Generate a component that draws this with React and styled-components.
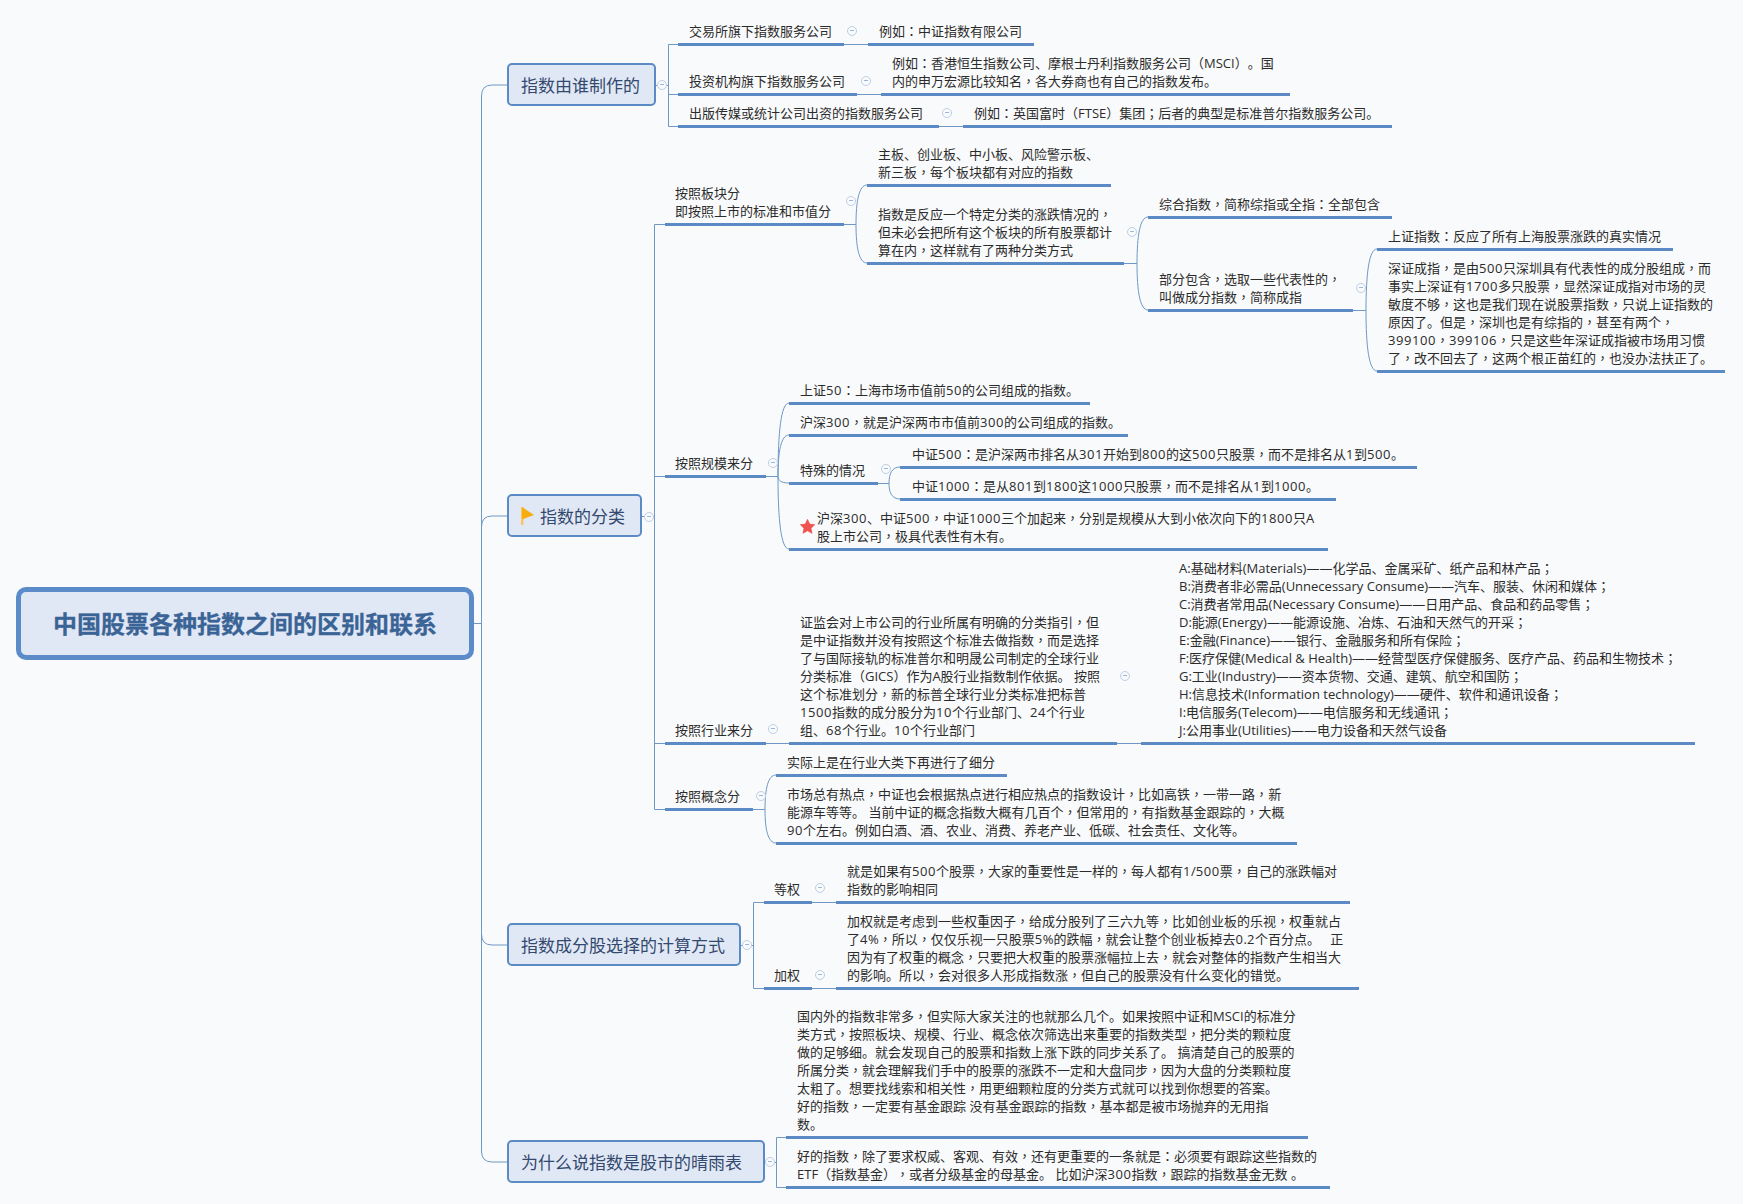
import styled, { createGlobalStyle } from 'styled-components';

const GlobalStyle = createGlobalStyle`
  html, body {
    margin: 0;
    padding: 0;
    background: #f9fafb;
  }
`;

const Canvas = styled.div`
  position: relative;
  width: 1743px;
  height: 1204px;
  overflow: hidden;
  background: #f9fafb;
  font-family: "Open Sans", "Noto Sans CJK SC", sans-serif;
  text-spacing-trim: space-all;
`;

const Links = styled.svg`
  position: absolute;
  left: 0;
  top: 0;
`;

const RootTopic = styled.div`
  position: absolute;
  left: 16px;
  top: 587px;
  width: 458px;
  height: 73px;
  box-sizing: border-box;
  display: flex;
  align-items: center;
  justify-content: center;
  padding-bottom: 2px;
  background: #e1e8f5;
  border: 5px solid #5b8bc9;
  border-radius: 10px;
  color: #3b6496;
  font-size: 24px;
  font-weight: 700;
  -webkit-text-stroke: 0.3px #3b6496;
`;

const MainTopic = styled.div.attrs(({ $x, $y, $w }) => ({
  style: { left: $x, top: $y, width: $w },
}))`
  position: absolute;
  height: 43px;
  box-sizing: border-box;
  display: flex;
  align-items: center;
  gap: 6px;
  padding-left: 12px;
  background: #e1e8f5;
  border: 2px solid #5b8bc4;
  border-radius: 5px;
  color: #33496e;
  font-size: 17px;
  white-space: nowrap;
`;

const SubTopic = styled.div.attrs(({ $x, $x2, $y, $n }) => ({
  style: { left: $x, top: $y - 4 - $n * 18, width: $x2 - $x },
}))`
  position: absolute;
  box-sizing: border-box;
  padding: 0 0 3px ${({ $pad }) => $pad}px;
  border-bottom: 3px solid #5b8ac5;
  color: #2b2b2b;
  font-size: 13px;
  line-height: 18px;
  white-space: pre;
`;

const Line = styled.div`
  height: 18px;
`;

// digits run about half a pixel wider in the reference
const Digits = styled.span`
  letter-spacing: 0.56px;
`;

// the TC cut centres these marks in their cell, as the reference does
const Mark = styled.span`
  font-family: "Noto Sans CJK TC", sans-serif;
`;

const StarIcon = styled.svg`
  position: absolute;
  left: 11px;
  bottom: 14px;
`;

const Fold = styled.span.attrs(({ $x, $y }) => ({
  style: { left: $x - 5, top: $y - 5 },
}))`
  position: absolute;
  width: 10px;
  height: 10px;
  box-sizing: border-box;
  border: 1px solid #bccfe6;
  border-radius: 50%;
  background: #f9fafb;

  &::after {
    content: '';
    position: absolute;
    left: 2px;
    top: 3px;
    width: 4px;
    height: 1px;
    background: #9db7d8;
  }
`;

const mainTopics = [
  { x: 507, y: 63, w: 149, text: '指数由谁制作的' },
  { x: 507, y: 494, w: 135, text: '指数的分类', flag: true },
  { x: 507, y: 923, w: 234, text: '指数成分股选择的计算方式' },
  { x: 507, y: 1140, w: 258, text: '为什么说指数是股市的晴雨表' },
];

const subTopics = [
  { x: 678, x2: 844, y: 44, lines: ['交易所旗下指数服务公司'] },
  { x: 868, x2: 1034, y: 44, lines: ['例如：中证指数有限公司'] },
  { x: 678, x2: 857, y: 94, lines: ['投资机构旗下指数服务公司'] },
  {
    x: 881,
    x2: 1290,
    y: 94,
    lines: ['例如：香港恒生指数公司、摩根士丹利指数服务公司（MSCI）。国', '内的申万宏源比较知名，各大券商也有自己的指数发布。'],
  },
  { x: 678, x2: 939, y: 126, lines: ['出版传媒或统计公司出资的指数服务公司'] },
  { x: 963, x2: 1392, y: 126, lines: ['例如：英国富时（FTSE）集团；后者的典型是标准普尔指数服务公司。'] },
  { x: 665, x2: 844, y: 224, pad: 10, lines: ['按照板块分', '即按照上市的标准和市值分'] },
  { x: 867, x2: 1111, y: 185, lines: ['主板、创业板、中小板、风险警示板、', '新三板，每个板块都有对应的指数'] },
  {
    x: 867,
    x2: 1124,
    y: 263,
    lines: ['指数是反应一个特定分类的涨跌情况的，', '但未必会把所有这个板块的所有股票都计', '算在内，这样就有了两种分类方式'],
  },
  { x: 1148, x2: 1392, y: 217, lines: ['综合指数，简称综指或全指：全部包含'] },
  { x: 1148, x2: 1353, y: 310, lines: ['部分包含，选取一些代表性的，', '叫做成分指数，简称成指'] },
  { x: 1377, x2: 1673, y: 249, lines: ['上证指数：反应了所有上海股票涨跌的真实情况'] },
  {
    x: 1377,
    x2: 1725,
    y: 371,
    lines: [
      '深证成指，是由500只深圳具有代表性的成分股组成，而',
      '事实上深证有1700多只股票，显然深证成指对市场的灵',
      '敏度不够，这也是我们现在说股票指数，只说上证指数的',
      '原因了。但是，深圳也是有综指的，甚至有两个，',
      '399100，399106，只是这些年深证成指被市场用习惯',
      '了，改不回去了，这两个根正苗红的，也没办法扶正了。',
    ],
  },
  { x: 665, x2: 766, y: 476, pad: 10, lines: ['按照规模来分'] },
  { x: 789, x2: 1090, y: 403, lines: ['上证50：上海市场市值前50的公司组成的指数。'] },
  { x: 789, x2: 1128, y: 435, lines: ['沪深300，就是沪深两市市值前300的公司组成的指数。'] },
  { x: 789, x2: 878, y: 483, lines: ['特殊的情况'] },
  { x: 900, x2: 1417, y: 467, pad: 12, lines: ['中证500：是沪深两市排名从301开始到800的这500只股票，而不是排名从1到500。'] },
  { x: 900, x2: 1336, y: 499, pad: 12, lines: ['中证1000：是从801到1800这1000只股票，而不是排名从1到1000。'] },
  {
    x: 789,
    x2: 1328,
    y: 549,
    pad: 28,
    star: true,
    lines: ['沪深300、中证500，中证1000三个加起来，分别是规模从大到小依次向下的1800只A', '股上市公司，极具代表性有木有。'],
  },
  { x: 665, x2: 766, y: 743, pad: 10, lines: ['按照行业来分'] },
  {
    x: 789,
    x2: 1117,
    y: 743,
    lines: [
      '证监会对上市公司的行业所属有明确的分类指引，但',
      '是中证指数并没有按照这个标准去做指数，而是选择',
      '了与国际接轨的标准普尔和明晟公司制定的全球行业',
      '分类标准（GICS）作为A股行业指数制作依据。 按照',
      '这个标准划分，新的标普全球行业分类标准把标普',
      '1500指数的成分股分为10个行业部门、24个行业',
      '组、68个行业。10个行业部门',
    ],
  },
  {
    x: 1141,
    x2: 1695,
    y: 743,
    pad: 38,
    lines: [
      'A:基础材料(Materials)——化学品、金属采矿、纸产品和林产品；',
      'B:消费者非必需品(Unnecessary Consume)——汽车、服装、休闲和媒体；',
      'C:消费者常用品(Necessary Consume)——日用产品、食品和药品零售；',
      'D:能源(Energy)——能源设施、冶炼、石油和天然气的开采；',
      'E:金融(Finance)——银行、金融服务和所有保险；',
      'F:医疗保健(Medical & Health)——经营型医疗保健服务、医疗产品、药品和生物技术；',
      'G:工业(Industry)——资本货物、交通、建筑、航空和国防；',
      'H:信息技术(Information technology)——硬件、软件和通讯设备；',
      'I:电信服务(Telecom)——电信服务和无线通讯；',
      'J:公用事业(Utilities)——电力设备和天然气设备',
    ],
  },
  { x: 665, x2: 753, y: 809, pad: 10, lines: ['按照概念分'] },
  { x: 776, x2: 1007, y: 775, lines: ['实际上是在行业大类下再进行了细分'] },
  {
    x: 776,
    x2: 1297,
    y: 843,
    lines: [
      '市场总有热点，中证也会根据热点进行相应热点的指数设计，比如高铁，一带一路，新',
      '能源车等等。 当前中证的概念指数大概有几百个，但常用的，有指数基金跟踪的，大概',
      '90个左右。例如白酒、酒、农业、消费、养老产业、低碳、社会责任、文化等。',
    ],
  },
  { x: 764, x2: 812, y: 902, pad: 10, lines: ['等权'] },
  { x: 764, x2: 812, y: 988, pad: 10, lines: ['加权'] },
  {
    x: 836,
    x2: 1350,
    y: 902,
    lines: ['就是如果有500个股票，大家的重要性是一样的，每人都有1/500票，自己的涨跌幅对', '指数的影响相同'],
  },
  {
    x: 836,
    x2: 1359,
    y: 988,
    lines: [
      '加权就是考虑到一些权重因子，给成分股列了三六九等，比如创业板的乐视，权重就占',
      '了4%，所以，仅仅乐视一只股票5%的跌幅，就会让整个创业板掉去0.2个百分点。   正',
      '因为有了权重的概念，只要把大权重的股票涨幅拉上去，就会对整体的指数产生相当大',
      '的影响。所以，会对很多人形成指数涨，但自己的股票没有什么变化的错觉。',
    ],
  },
  {
    x: 786,
    x2: 1308,
    y: 1137,
    lines: [
      '国内外的指数非常多，但实际大家关注的也就那么几个。如果按照中证和MSCI的标准分',
      '类方式，按照板块、规模、行业、概念依次筛选出来重要的指数类型，把分类的颗粒度',
      '做的足够细。就会发现自己的股票和指数上涨下跌的同步关系了。 搞清楚自己的股票的',
      '所属分类，就会理解我们手中的股票的涨跌不一定和大盘同步，因为大盘的分类颗粒度',
      '太粗了。想要找线索和相关性，用更细颗粒度的分类方式就可以找到你想要的答案。',
      '好的指数，一定要有基金跟踪 没有基金跟踪的指数，基本都是被市场抛弃的无用指',
      '数。',
    ],
  },
  {
    x: 786,
    x2: 1330,
    y: 1187,
    lines: ['好的指数，除了要求权威、客观、有效，还有更重要的一条就是：必须要有跟踪这些指数的', 'ETF（指数基金），或者分级基金的母基金。 比如沪深300指数，跟踪的指数基金无数 。'],
  },
];

const folds = [
  [662, 85], [852, 31], [866, 81], [947, 113], [851, 201], [1132, 232], [1361, 288],
  [649, 517], [773, 463], [886, 469], [773, 729], [1125, 676], [761, 796],
  [747, 945], [820, 888], [820, 975], [770, 1162],
];

// one curve per child: runs almost straight up or down, then bends into the underline
const branch = (x, y, tx, ty) =>
  `M${x} ${y} C${x} ${y + (ty - y) * 0.6} ${x + 3} ${ty} ${tx} ${ty}`;

const linkPaths = [
  // root and main spine
  'M473 623.5H481.5',
  'M507 85H492Q481.5 85 481.5 96V1151Q481.5 1162 492 1162H507',
  'M481.5 527Q481.5 516 492 516H507',
  'M481.5 934Q481.5 945 492 945H507',
  // first group
  'M655 85.5H668.5',
  'M678 44.5H668.5V126.5H678',
  'M668.5 94.5H678',
  'M844 44.5H868',
  'M857 94.5H881',
  'M939 126.5H963',
  // second spine
  'M641 516.5H654.5',
  'M665 224.5H654.5V809.5H665',
  'M654.5 476.5H665',
  'M654.5 743.5H665',
  // curved child fans
  'M844 224.5H856',
  branch(856, 224.5, 867, 185),
  branch(856, 224.5, 867, 263),
  'M1124 263.5H1137',
  branch(1137, 263.5, 1148, 217),
  branch(1137, 263.5, 1148, 310),
  'M1353 310.5H1366',
  branch(1366, 310.5, 1377, 249),
  branch(1366, 310.5, 1377, 371),
  'M766 476.5H778',
  branch(778, 476.5, 789, 403),
  branch(778, 476.5, 789, 435),
  branch(778, 476.5, 789, 483),
  branch(778, 476.5, 789, 549),
  'M878 483.5H889',
  branch(889, 483.5, 900, 467),
  branch(889, 483.5, 900, 499),
  'M766 743.5H789',
  'M1117 743.5H1141',
  'M753 809.5H765',
  branch(765, 809.5, 776, 775),
  branch(765, 809.5, 776, 843),
  // third group
  'M740 945.5H753.5',
  'M764 902.5H753.5V988.5H764',
  'M812 902.5H836',
  'M812 988.5H836',
  // fourth group
  'M764 1162.5H776.5',
  'M786 1137.5H776.5V1187.5H786',
];

const renderLine = line =>
  line.split(/(\d+|[，：；])/).map((part, i) => {
    if (/^\d/.test(part)) return <Digits key={i}>{part}</Digits>;
    if (/^[，：；]$/.test(part)) return <Mark key={i}>{part}</Mark>;
    return part;
  });

function App() {
  return (
    <Canvas>
      <GlobalStyle />
      <Links width="1743" height="1204" fill="none" stroke="#6f98c4" strokeWidth="1">
        {linkPaths.map(d => (
          <path key={d} d={d} />
        ))}
      </Links>
      <RootTopic>中国股票各种指数之间的区别和联系</RootTopic>
      {mainTopics.map(t => (
        <MainTopic key={t.text} $x={t.x} $y={t.y} $w={t.w}>
          {t.flag && (
            <svg width="13" height="18" viewBox="0 0 13 18">
              <path d="M0 0H2.5V18H0Z" fill="#f8c664" />
              <path d="M1 0L13 8L1 12.5Z" fill="#f6ad10" />
            </svg>
          )}
          {t.text}
        </MainTopic>
      ))}
      {subTopics.map(t => (
        <SubTopic key={t.lines[0]} $x={t.x} $x2={t.x2} $y={t.y} $n={t.lines.length} $pad={t.pad ?? 11}>
          {t.star && (
            <StarIcon width="15" height="15" viewBox="0 0 20 20">
              <path
                d="M10 0.5L12.9 6.8L19.6 7.6L14.6 12.2L16 19L10 15.6L4 19L5.4 12.2L0.4 7.6L7.1 6.8Z"
                fill="#ef5350"
                stroke="#ef5350"
                strokeWidth="1"
                strokeLinejoin="round"
              />
            </StarIcon>
          )}
          {t.lines.map(line => (
            <Line key={line}>{renderLine(line)}</Line>
          ))}
        </SubTopic>
      ))}
      {folds.map(([x, y]) => (
        <Fold key={`${x}-${y}`} $x={x} $y={y} />
      ))}
    </Canvas>
  );
}

export default App;
